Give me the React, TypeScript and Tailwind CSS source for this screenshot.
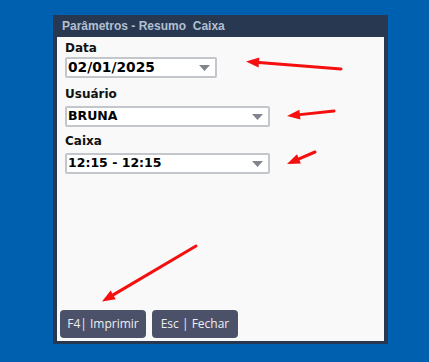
import React from 'react';

const labelFont = { fontFamily: '"DejaVu Sans", Verdana, sans-serif' };

function Caret() {
  return (
    <svg width="11" height="6" viewBox="0 0 11 6" className="shrink-0">
      <path d="M0 0 L11 0 L5.5 6 Z" fill="#80858e" />
    </svg>
  );
}

function Field({ label, value, width, labelClass, fieldClass, valueClass }: { label: string; value: string; width: string; labelClass: string; fieldClass: string; valueClass: string }) {
  return (
    <div className="flex flex-col">
      <div className={`text-[12px] font-bold leading-[16px] text-[#111] ${labelClass}`}>{label}</div>
      <div className={`flex h-[21px] items-center justify-between rounded-[2px] border-2 border-[#c3c6cb] bg-white pl-[1px] pr-[5px] ${width} ${fieldClass}`}>
        <span className={`font-bold leading-none text-black ${valueClass}`}>{value}</span>
        <Caret />
      </div>
    </div>
  );
}

function RedArrow({ x1, y1, x2, y2 }: { x1: number; y1: number; x2: number; y2: number }) {
  const a = Math.atan2(y2 - y1, x2 - x1);
  const len = 13;
  const w = 5;
  const bx = x2 - Math.cos(a) * len;
  const by = y2 - Math.sin(a) * len;
  const px = -Math.sin(a) * w;
  const py = Math.cos(a) * w;
  return (
    <g>
      <line x1={x1} y1={y1} x2={bx} y2={by} stroke="#f50f0f" strokeWidth="3" strokeLinecap="round" />
      <polygon points={`${x2},${y2} ${bx + px},${by + py} ${bx - px},${by - py}`} fill="#f50f0f" />
    </g>
  );
}

export default function App() {
  return (
    <div className="relative h-[362px] w-[429px] overflow-hidden bg-[#0060b0] pl-[53px] pt-[15px]" style={labelFont}>
      <div className="flex h-[329px] w-[335px] flex-col bg-[#283851]">
        <div className="flex h-[22px] items-center whitespace-pre pl-[9px] text-[12px] font-bold text-[#b2c0d2]" style={{ fontFamily: '"Liberation Sans", Arial, sans-serif' }}>
          Parâmetros - Resumo  Caixa
        </div>
        <div className="mx-[4px] mb-[3px] flex flex-1 flex-col bg-[#f9f9f9] px-[8px] pt-[3px]">
          <Field label="Data" value="02/01/2025" width="w-[152px]" labelClass="" fieldClass="mt-[1px] h-[20px]" valueClass="text-[13.8px]" />
          <Field label="Usuário" value="BRUNA" width="w-[205px]" labelClass="mt-[8px]" fieldClass="mt-[4px]" valueClass="text-[12.5px]" />
          <Field label="Caixa" value="12:15 - 12:15" width="w-[205px]" labelClass="mt-[6px]" fieldClass="mt-[4px]" valueClass="text-[12.5px]" />
          <div className="mt-auto mb-[3px] -ml-[5px] flex gap-[6px]" style={{ fontFamily: '"Open Sans", "Noto Sans", sans-serif' }}>
            <button className="h-[28px] w-[86px] rounded-[4px] bg-[#4b5169] text-[12px] text-[#eceef4]">F4| Imprimir</button>
            <button className="h-[28px] w-[86px] rounded-[4px] bg-[#4b5169] text-[12px] text-[#eceef4]">Esc | Fechar</button>
          </div>
        </div>
      </div>
      <svg className="pointer-events-none absolute left-0 top-0" width="429" height="362">
        <RedArrow x1={341} y1={69} x2={246} y2={61.5} />
        <RedArrow x1={334} y1={111} x2={287} y2={116} />
        <RedArrow x1={315} y1={152} x2={287} y2={164} />
        <RedArrow x1={196} y1={246} x2={102} y2={301.5} />
      </svg>
    </div>
  );
}
